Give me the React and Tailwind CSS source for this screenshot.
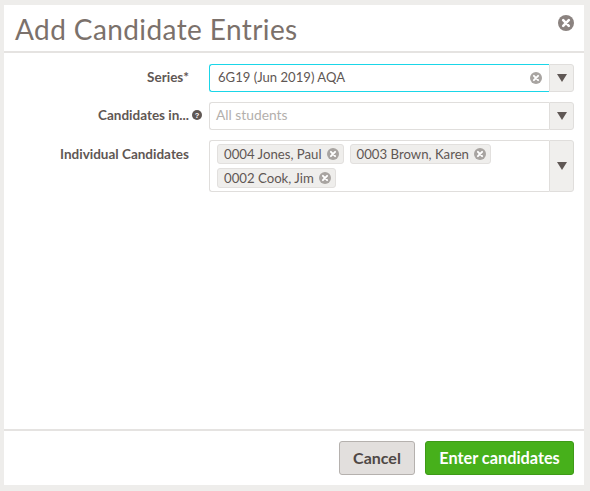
import React from "react";

const font = { fontFamily: 'Lato, "Noto Sans", "Liberation Sans", sans-serif' };

function XCircle({ size = 12, color = "#a8a4a1" }) {
  return (
    <svg width={size} height={size} viewBox="0 0 16 16" className="shrink-0">
      <circle cx="8" cy="8" r="8" fill={color} />
      <path d="M5.2 5.2 L10.8 10.8 M10.8 5.2 L5.2 10.8" stroke="#fff" strokeWidth="2.6" strokeLinecap="round" />
    </svg>
  );
}

function Arrow() {
  return (
    <svg width="10" height="8" viewBox="0 0 10 8">
      <path d="M0 0 H10 L5 8 Z" fill="#5f5754" />
    </svg>
  );
}

function Caret({ h }) {
  return (
    <div className={`w-[25px] shrink-0 flex items-center justify-center bg-[#f0efed] border border-[#e0dedc] rounded-r-[3px] ${h}`}>
      <Arrow />
    </div>
  );
}

function Tag({ children }) {
  return (
    <span className="h-[20px] flex items-center gap-[5px] pl-[6px] pr-[4px] bg-[#efeeec] border border-[#e2e0de] rounded-[3px] text-[13.2px] leading-[18px] text-[#5f5754] whitespace-nowrap">
      <span>{children}</span>
      <XCircle size={12} />
    </span>
  );
}

function Label({ children, className = "" }) {
  return (
    <div className={`relative w-[185px] shrink-0 text-right text-[13.5px] font-bold text-[#5f5754] whitespace-nowrap ${className}`}>
      {children}
    </div>
  );
}

export default function App() {
  return (
    <div className="w-[590px] h-[491px] bg-[#eeedeb] pt-[5px] pb-[6px] pl-[4px] pr-[6px]" style={font}>
      <div className="h-full bg-white flex flex-col">
        <div className="h-[48px] shrink-0 border-b-2 border-[#e5e3e1] flex items-start justify-between pl-[11px] pr-[10px]">
          <h1 className="text-[28px] leading-[48px] text-[#7b716b] font-normal tracking-[0.4px]">Add Candidate Entries</h1>
          <div className="mt-[10px]">
            <XCircle size={16} color="#8b8380" />
          </div>
        </div>

        <div className="flex-1 flex flex-col gap-[10px] pt-[11px] pr-[10px]">
          <div className="flex items-center gap-[20px]">
            <Label className="pb-[2px]">Series*</Label>
            <div className="flex-1 flex h-[28px]">
              <div className="flex-1 flex items-center justify-between pl-[8px] pr-[7px] border border-[#1ad6e8] border-r-0 rounded-l-[3px] text-[13.1px] text-[#5f5754]">
                <span className="mt-[-1px]">6G19 (Jun 2019) AQA</span>
                <XCircle size={12} />
              </div>
              <Caret h="h-[28px]" />
            </div>
          </div>

          <div className="flex items-center gap-[20px]">
            <Label className="pb-[2px]">
              Candidates in...
              <span className="absolute left-[188px] top-[5px] flex">
                <svg width="10" height="10" viewBox="0 0 16 16">
                  <circle cx="8" cy="8" r="8" fill="#5f5754" />
                  <text x="8" y="12.5" textAnchor="middle" fontSize="12" fontWeight="700" fill="#fff" fontFamily="Liberation Sans, sans-serif">?</text>
                </svg>
              </span>
            </Label>
            <div className="flex-1 flex h-[28px]">
              <div className="flex-1 flex items-center pl-[6px] border border-[#e0dedc] border-r-0 rounded-l-[3px] text-[13.8px] text-[#b3afac]">
                <span className="mt-[-1px]">All students</span>
              </div>
              <Caret h="h-[28px]" />
            </div>
          </div>

          <div className="flex items-start gap-[20px]">
            <Label className="pt-[4px]">Individual Candidates</Label>
            <div className="flex-1 flex h-[52px]">
              <div className="flex-1 flex flex-wrap content-start gap-x-[6px] gap-y-[4px] pl-[7px] pt-[3px] border border-[#e0dedc] border-r-0 rounded-l-[3px]">
                <Tag>0004 Jones, Paul</Tag>
                <Tag>0003 Brown, Karen</Tag>
                <Tag>0002 Cook, Jim</Tag>
              </div>
              <Caret h="h-[52px]" />
            </div>
          </div>
        </div>

        <div className="h-[56px] shrink-0 border-t-2 border-[#e5e3e1] flex items-start justify-end gap-[10px] pt-[10px] pr-[10px]">
          <button className="w-[76px] h-[34px] bg-[#e2dfdd] border border-[#b5b1ae] rounded-[3px] text-[16px] font-bold text-[#4f4845]">
            Cancel
          </button>
          <button className="w-[149px] h-[34px] bg-[#47b01b] border border-[#3e9a17] rounded-[3px] text-[16.3px] font-bold text-white">
            Enter candidates
          </button>
        </div>
      </div>
    </div>
  );
}
